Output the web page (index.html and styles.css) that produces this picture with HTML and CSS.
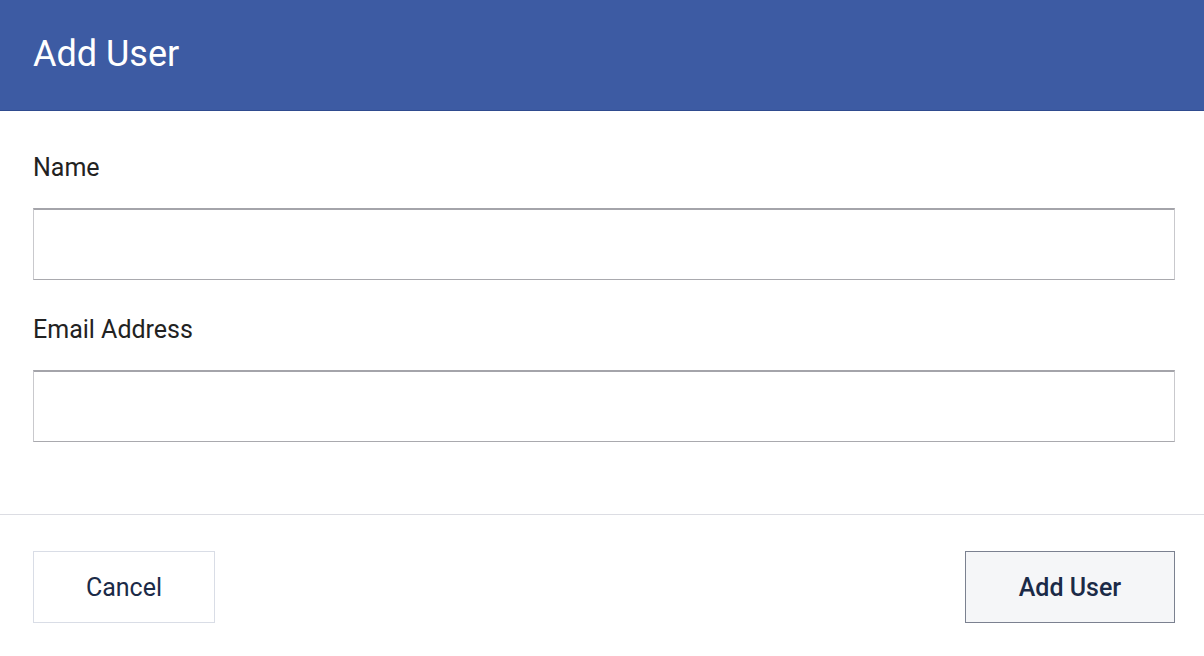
FILE: index.html
```html
<!DOCTYPE html>
<html lang="en">
<head>
    <meta charset="UTF-8">
    <meta name="viewport" content="width=device-width, initial-scale=1.0">
    <title>Add User</title>
    <link rel="stylesheet" href="styles.css">
</head>
<body>

<div class="dialog">
    <div class="dialog-header">
        <h2>Add User</h2>
    </div>

    <form class="dialog-body" id="addUserForm">
        <label for="name">Name</label>
        <input type="text" id="name">

        <label for="email">Email Address</label>
        <input type="email" id="email">
    </form>

    <div class="dialog-footer">
        <button type="button" class="btn">Cancel</button>
        <button type="submit" form="addUserForm" class="btn btn-primary">Add User</button>
    </div>
</div>

</body>
</html>
```

FILE: styles.css
```css
body {
    font-family: Roboto, "Liberation Sans", Arial, sans-serif;
    margin: 0;
    background-color: #fff;
}
.dialog {
    width: 1204px;
    height: 656px;
    display: flex;
    flex-direction: column;
}
.dialog-header {
    height: 110px;
    display: flex;
    align-items: center;
    padding: 0 33px;
    background-color: #3d5ba3;
    border-bottom: 1px solid #2f4b8f;
}
.dialog-header h2 {
    margin: 0;
    margin-top: -2px;
    font-size: 36px;
    font-weight: 400;
    color: #fff;
}
.dialog-body {
    display: flex;
    flex-direction: column;
    padding: 39px 29px 72px 33px;
    border-bottom: 1px solid #dcdde3;
}
label {
    font-size: 25px;
    line-height: 36px;
    color: #222;
}
input {
    height: 72px;
    box-sizing: border-box;
    margin: 22px 0 32px;
    border: 1px solid #c9c9cd;
    border-top: 2px solid #a4a4aa;
    border-bottom-color: #a9a9ae;
    font-size: 24px;
    padding: 0 16px;
}
input:last-child {
    margin-bottom: 0;
}
.dialog-footer {
    display: flex;
    justify-content: space-between;
    padding: 36px 29px 33px 33px;
}
.btn {
    height: 72px;
    width: 182px;
    font-family: inherit;
    font-size: 25px;
    color: #1b2a47;
    background-color: #fff;
    border: 1px solid #d9dde6;
    cursor: pointer;
}
.btn-primary {
    width: 210px;
    font-weight: 500;
    background-color: #f5f6f8;
    border-color: #7b8190;
}
```
